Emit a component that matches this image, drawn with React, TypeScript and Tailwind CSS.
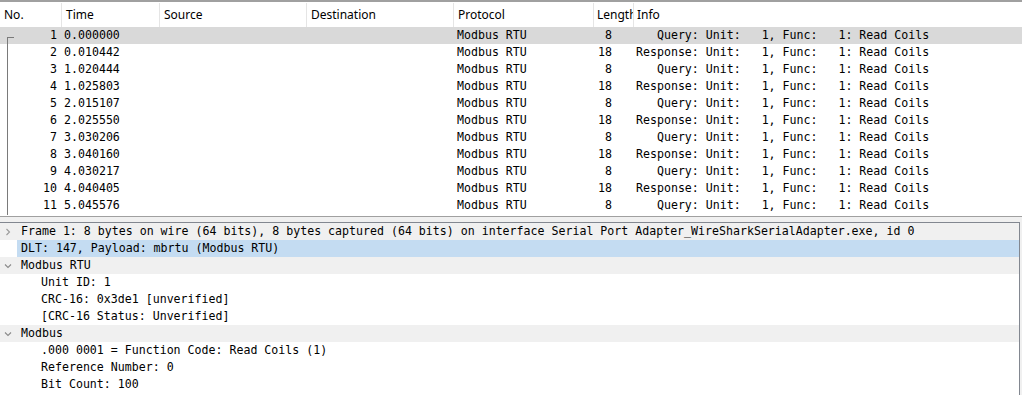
const packets = [
  { no: 1, time: "0.000000", len: 8, info: "   Query: Unit:   1, Func:   1: Read Coils" },
  { no: 2, time: "0.010442", len: 18, info: "Response: Unit:   1, Func:   1: Read Coils" },
  { no: 3, time: "1.020444", len: 8, info: "   Query: Unit:   1, Func:   1: Read Coils" },
  { no: 4, time: "1.025803", len: 18, info: "Response: Unit:   1, Func:   1: Read Coils" },
  { no: 5, time: "2.015107", len: 8, info: "   Query: Unit:   1, Func:   1: Read Coils" },
  { no: 6, time: "2.025550", len: 18, info: "Response: Unit:   1, Func:   1: Read Coils" },
  { no: 7, time: "3.030206", len: 8, info: "   Query: Unit:   1, Func:   1: Read Coils" },
  { no: 8, time: "3.040160", len: 18, info: "Response: Unit:   1, Func:   1: Read Coils" },
  { no: 9, time: "4.030217", len: 8, info: "   Query: Unit:   1, Func:   1: Read Coils" },
  { no: 10, time: "4.040405", len: 18, info: "Response: Unit:   1, Func:   1: Read Coils" },
  { no: 11, time: "5.045576", len: 8, info: "   Query: Unit:   1, Func:   1: Read Coils" },
];

type Node = { text: string; level: 0 | 1; arrow?: "open" | "closed"; kind?: "group" | "selected" };

const tree: Node[] = [
  { text: "Frame 1: 8 bytes on wire (64 bits), 8 bytes captured (64 bits) on interface Serial Port Adapter_WireSharkSerialAdapter.exe, id 0", level: 0, arrow: "closed", kind: "group" },
  { text: "DLT: 147, Payload: mbrtu (Modbus RTU)", level: 0, kind: "selected" },
  { text: "Modbus RTU", level: 0, arrow: "open", kind: "group" },
  { text: "Unit ID: 1", level: 1 },
  { text: "CRC-16: 0x3de1 [unverified]", level: 1 },
  { text: "[CRC-16 Status: Unverified]", level: 1 },
  { text: "Modbus", level: 0, arrow: "open", kind: "group" },
  { text: ".000 0001 = Function Code: Read Coils (1)", level: 1 },
  { text: "Reference Number: 0", level: 1 },
  { text: "Bit Count: 100", level: 1 },
];

const Arrow = ({ open }: { open: boolean }) =>
  open ? (
    <svg width="8" height="6" viewBox="0 0 8 6" className="text-[#8a8a8a]">
      <polyline points="1,1.5 4,4.5 7,1.5" fill="none" stroke="currentColor" strokeWidth="1.1" />
    </svg>
  ) : (
    <svg width="6" height="8" viewBox="0 0 6 8" className="text-[#9a9a9a]">
      <polyline points="1.5,1 4.5,4 1.5,7" fill="none" stroke="currentColor" strokeWidth="1.1" />
    </svg>
  );

const mono = "font-['DejaVu_Sans_Mono','Liberation_Mono',monospace] text-[11.6px] text-black";

export default function App() {
  return (
    <div className="w-[1022px] h-[395px] overflow-hidden bg-[#f0f0f0] flex flex-col">
      {/* packet list */}
      <div className="relative bg-white border-t-2 border-b border-[#a0a0a0] pb-[2px]">
        <div className="flex h-[25px] items-center pt-[1px] font-['Noto_Sans','Open_Sans',sans-serif] text-[12px] text-black whitespace-nowrap">
          <div className="w-[62px] h-full flex items-center pl-[4px] border-r border-[#e5e5e5]">No.</div>
          <div className="w-[98px] h-full flex items-center pl-[4px] border-r border-[#e5e5e5]">Time</div>
          <div className="w-[147px] h-full flex items-center pl-[4px] border-r border-[#e5e5e5]">Source</div>
          <div className="w-[147px] h-full flex items-center pl-[4px] border-r border-[#e5e5e5]">Destination</div>
          <div className="w-[140px] h-full flex items-center pl-[4px] border-r border-[#e5e5e5]">Protocol</div>
          <div className="w-[40px] h-full flex items-center pl-[3px] border-r border-[#e5e5e5] overflow-hidden">Length</div>
          <div className="flex-1 h-full flex items-center pl-[3px]">Info</div>
        </div>
        <div className={mono}>
          {packets.map((p) => (
            <div
              key={p.no}
              className={`flex h-[17px] leading-[17px] whitespace-pre ${p.no === 1 ? "bg-[#d9d9d9]" : ""}`}
            >
              <div className="w-[62px] text-right pr-[5px]">{p.no}</div>
              <div className="w-[98px] pl-[2px]">{p.time}</div>
              <div className="w-[147px]"></div>
              <div className="w-[147px]"></div>
              <div className="w-[140px] pl-[3px]">Modbus RTU</div>
              <div className="w-[40px] text-right pr-[22px]">{p.len}</div>
              <div className="flex-1 pl-[2px]">{p.info}</div>
            </div>
          ))}
        </div>
        <div className="absolute left-[7px] top-[35px] w-[7px] h-[178px] border-l border-t border-[#7a7a7a]" />
      </div>

      {/* splitter */}
      <div className="h-[5px]" />

      {/* packet details */}
      <div className={`flex-1 w-[1020px] bg-white border-t border-r border-[#828790] ${mono}`}>
        {tree.map((n, i) => (
          <div
            key={i}
            className={`relative flex h-[17px] leading-[17px] whitespace-pre ${n.kind === "group" ? "bg-[#f0f0f0]" : ""}`}
          >
            {n.kind === "selected" && <div className="absolute left-[17px] right-0 top-0 bottom-0 bg-[#c4dcf2]" />}
            <div className="w-[21px] flex items-center justify-center pr-[5px]">
              {n.arrow && <Arrow open={n.arrow === "open"} />}
            </div>
            <div className={`relative ${n.level === 1 ? "pl-[20px]" : ""}`}>{n.text}</div>
          </div>
        ))}
      </div>
    </div>
  );
}
